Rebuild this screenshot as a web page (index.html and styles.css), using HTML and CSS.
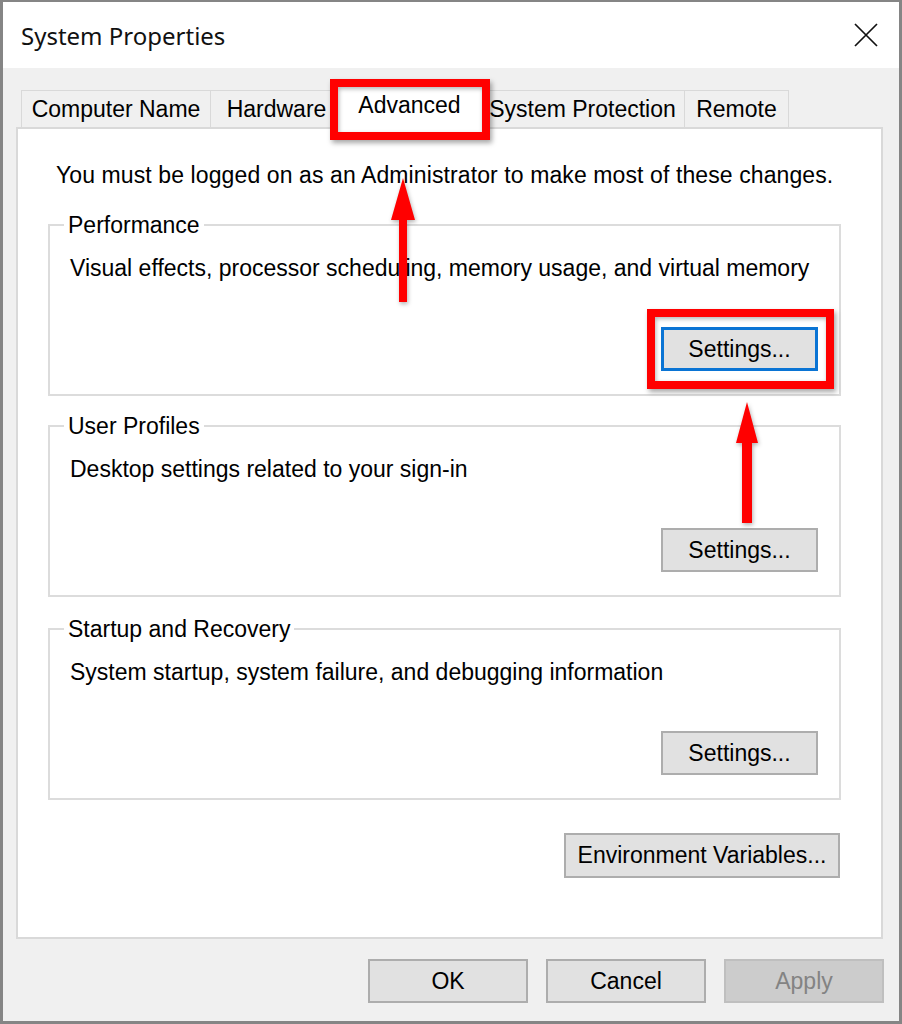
FILE: index.html
```html
<!DOCTYPE html>
<html lang="en">

<head>
    <meta charset="UTF-8">
    <meta name="viewport" content="width=device-width, initial-scale=1.0">
    <title>System Properties</title>
    <link rel="stylesheet" href="styles.css">
</head>

<body>
    <div class="window">
        <div class="titlebar">
            <span class="title">System Properties</span>
            <svg class="close" width="26" height="26" viewBox="0 0 26 26">
                <path d="M2 2 L24 24 M24 2 L2 24" stroke="#111" stroke-width="1.7" fill="none" />
            </svg>
        </div>

        <div class="content">
            <div class="tabs">
                <div class="tab t-name">Computer Name</div>
                <div class="tab t-hw">Hardware</div>
                <div class="tab t-adv active mark">Advanced</div>
                <div class="tab t-sp">System Protection</div>
                <div class="tab t-rm">Remote</div>
            </div>

            <div class="panel">
                <p class="note">You must be logged on as an Administrator to make most of these changes.</p>

                <fieldset class="group">
                    <legend>Performance</legend>
                    <p class="desc">Visual effects, processor scheduling, memory usage, and virtual memory</p>
                    <div class="row">
                        <button class="btn focus mark">Settings...</button>
                    </div>
                </fieldset>

                <fieldset class="group">
                    <legend>User Profiles</legend>
                    <p class="desc">Desktop settings related to your sign-in</p>
                    <div class="row">
                        <button class="btn">Settings...</button>
                    </div>
                </fieldset>

                <fieldset class="group last">
                    <legend>Startup and Recovery</legend>
                    <p class="desc">System startup, system failure, and debugging information</p>
                    <div class="row">
                        <button class="btn">Settings...</button>
                    </div>
                </fieldset>

                <div class="row env">
                    <button class="btn wide">Environment Variables...</button>
                </div>
            </div>

            <div class="actions">
                <button class="btn">OK</button>
                <button class="btn">Cancel</button>
                <button class="btn" disabled>Apply</button>
            </div>
        </div>
    </div>

    <!-- red arrows drawn over the dialog -->
    <svg class="arrow arrow-tab" width="28" height="130" viewBox="0 0 28 130">
        <path d="M14 2 L26 44 L18 44 L18 126 L10 126 L10 44 L2 44 Z" fill="#f00" />
    </svg>
    <svg class="arrow arrow-btn" width="28" height="126" viewBox="0 0 28 126">
        <path d="M14 2 L25 43 L19 43 L19 123 L9 123 L9 43 L3 43 Z" fill="#f00" />
    </svg>
</body>

</html>
```

FILE: styles.css
```css
body,
html {
    margin: 0;
    padding: 0;
}

* {
    box-sizing: border-box;
}

body {
    position: relative;
    width: 902px;
    height: 1024px;
    font-family: "Liberation Sans", Arial, sans-serif;
    font-size: 23px;
    color: #000;
    background: #fff;
}

.window {
    width: 902px;
    height: 1024px;
    border: 3px solid #858585;
    border-top-width: 2px;
    background: #f0f0f0;
    display: flex;
    flex-direction: column;
}

.titlebar {
    height: 66px;
    background: #fff;
    display: flex;
    align-items: center;
    justify-content: space-between;
    padding: 0 20px 0 18px;
}

.title {
    font-family: "Noto Sans", "Open Sans", sans-serif;
    font-size: 24px;
    color: #111;
}

.content {
    padding: 20px 16px 0 13px;
}

/* tabs */
.tabs {
    display: flex;
    align-items: flex-end;
    height: 39px;
    padding-left: 5px;
}

.tab {
    height: 37px;
    line-height: 36px;
    border: 1px solid #d9d9d9;
    border-bottom: none;
    margin-right: -1px;
    background: #f0f0f0;
    white-space: nowrap;
    text-align: center;
}

.t-name { width: 190px; }
.t-hw { width: 129px; padding-left: 4px; }
.t-adv { width: 143px; }
.t-sp { width: 205px; }
.t-rm { width: 105px; }

.tab.active {
    position: relative;
    z-index: 2;
    width: 149px;
    height: 45px;
    line-height: 40px;
    margin: 0 -4px -2px -3px;
    background: #fff;
}

/* panel */
.panel {
    height: 812px;
    background: #fff;
    border: 2px solid #d9d9d9;
    padding: 33px 40px 0 30px;
}

.note {
    margin: 0 0 24px 8px;
    line-height: 26px;
    letter-spacing: 0.1px;
    white-space: nowrap;
}

.group {
    margin: 0 0 17px 0;
    padding: 0 21px 23px 20px;
    border: 2px solid #dcdcdc;
    min-width: 0;
}

.group.last {
    margin-top: 19px;
}

.group legend {
    padding: 0 4px;
    margin-left: -6px;
    line-height: 26px;
}

.desc {
    margin: 17px 0 0 0;
    line-height: 26px;
    white-space: nowrap;
}

.row {
    display: flex;
    justify-content: flex-end;
    margin-top: 46px;
}

.env {
    margin-top: 33px;
    margin-right: 1px;
}

/* buttons */
.btn {
    font: inherit;
    color: #000;
    width: 157px;
    height: 44px;
    background: #e1e1e1;
    border: 2px solid #adadad;
    padding: 0;
}

.btn.wide {
    width: 276px;
    height: 45px;
}

.btn.focus {
    border: 3px solid #0a74d4;
}

.btn:disabled {
    background: #cccccc;
    border-color: #bfbfbf;
    color: #838383;
}

.actions {
    display: flex;
    justify-content: flex-end;
    gap: 18px;
    margin: 20px -1px 0 0;
}

.actions .btn {
    width: 160px;
}

/* red highlight boxes */
.mark {
    position: relative;
}

.mark::after {
    content: '';
    position: absolute;
    border: 8px solid #f00;
    box-shadow: 2px 3px 5px rgba(0, 0, 0, 0.35), inset 1px 2px 4px rgba(0, 0, 0, 0.3);
    pointer-events: none;
}

.tab.mark::after {
    left: -6px;
    right: -7px;
    top: -6px;
    bottom: -11px;
}

.btn.mark::after {
    left: -17px;
    right: -19px;
    top: -21px;
    bottom: -21px;
}

/* arrows */
.arrow {
    position: absolute;
    filter: drop-shadow(1px 2px 2px rgba(0, 0, 0, 0.3));
}

.arrow-tab {
    left: 389px;
    top: 176px;
}

.arrow-btn {
    left: 733px;
    top: 400px;
}
```
